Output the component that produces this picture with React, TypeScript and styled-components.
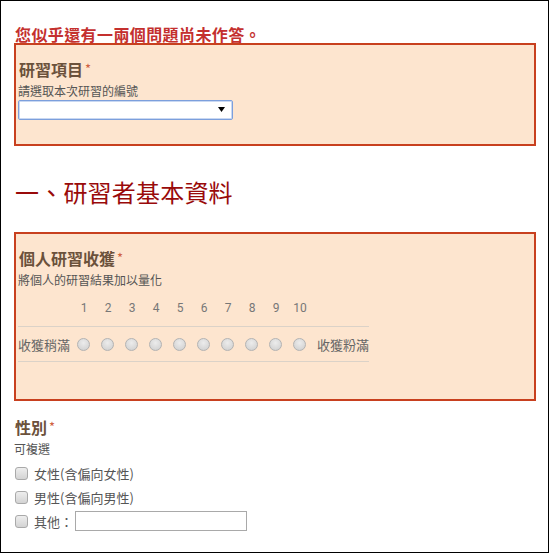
import React from "react";
import styled, { createGlobalStyle } from "styled-components";

const Global = createGlobalStyle`
  html, body { margin: 0; padding: 0; background: #fff; }
  body { font-family: "Noto Sans CJK TC", "Noto Sans", sans-serif; }
  * { box-sizing: border-box; }
`;

const Frame = styled.div`
  width: 549px;
  height: 553px;
  border: 1px solid #000;
  padding: 24px 12px 0 13px;
  overflow: hidden;
`;

const ErrorText = styled.div`
  font-size: 16px;
  line-height: 18px;
  font-weight: 700;
  color: #c4302e;
  padding-left: 1px;
  letter-spacing: 0.4px;
`;

const Section = styled.div<{ $error?: boolean }>`
  border: 2px solid ${(p) => (p.$error ? "#c8401f" : "transparent")};
  background: ${(p) => (p.$error ? "#fde5cf" : "transparent")};
  padding: 14px 0 ${(p) => (p.$error ? "24px" : "0")} ${(p) => (p.$error ? "2px" : "0")};
  margin-left: ${(p) => (p.$error ? "0" : "-2px")};
`;

const Title = styled.div`
  font-size: 16px;
  line-height: 20px;
  font-weight: 700;
  color: #6b513b;
  padding-left: 1px;
  display: flex;
  align-items: flex-start;
`;

const Star = styled.span`
  color: #d0603f;
  font-size: 13px;
  line-height: 14px;
  font-weight: 400;
  margin-left: 2px;
  margin-top: 3px;
`;

const Desc = styled.div`
  margin-top: 4px;
  font-size: 12px;
  line-height: 15px;
  color: #555;
`;

const SelectWrap = styled.div`
  position: relative;
  margin-top: 2px;
  width: 215px;
  height: 20px;
`;

const Select = styled.select`
  appearance: none;
  display: block;
  width: 100%;
  height: 100%;
  border: 1px solid #7c9fdc;
  box-shadow: inset 0 0 0 1px #c9d8f2;
  border-radius: 2px;
  background: #fff;
  outline: none;
  font-size: 12px;
`;

const Arrow = styled.svg`
  position: absolute;
  right: 8px;
  top: 7px;
  pointer-events: none;
`;

const Heading = styled.h2`
  margin: 32px 0 26px 1px;
  font-size: 24px;
  line-height: 28px;
  font-weight: 400;
  color: #990a0a;
  letter-spacing: 0.2px;
`;

const Scale = styled.div`
  margin-top: 3px;
  width: 351px;
  padding-bottom: 13px;
`;

const ScaleRow = styled.div<{ $ruled?: boolean }>`
  display: grid;
  grid-template-columns: 54px repeat(10, 24px) 57px;
  height: 36px;
  align-items: center;
  border-top: ${(p) => (p.$ruled ? "1px solid #dbd2c8" : "none")};
  border-bottom: ${(p) => (p.$ruled ? "1px solid #dbd2c8" : "none")};
`;

const Num = styled.span`
  font-family: Roboto, "Noto Sans", sans-serif;
  font-size: 12px;
  color: #777;
  text-align: center;
`;

const ScaleLabel = styled.span<{ $right?: boolean }>`
  font-size: 13px;
  color: #666;
  white-space: nowrap;
  padding-left: ${(p) => (p.$right ? "5px" : "0")};
`;

const RadioCell = styled.span`
  display: flex;
  justify-content: center;
`;

const Radio = styled.span`
  width: 13px;
  height: 13px;
  border-radius: 50%;
  border: 1px solid #b3b3b3;
  background: radial-gradient(circle at 50% 35%, #ececec 0%, #d6d6d6 70%, #cacaca 100%);
  margin-left: -1px;
`;

const Options = styled.div`
  margin-top: 5px;
  display: flex;
  flex-direction: column;
`;

const Option = styled.label`
  display: flex;
  align-items: center;
  height: 24px;
  font-size: 13px;
  color: #555;
`;

const Check = styled.span`
  width: 13px;
  height: 13px;
  border-radius: 3px;
  border: 1px solid #a9a9a9;
  background: linear-gradient(#eeeeee, #d3d3d3);
  margin: 0 6px 0 1px;
  flex: none;
`;

const OtherInput = styled.input`
  margin-left: 2px;
  width: 172px;
  height: 20px;
  border: 1px solid #a9a9a9;
  background: #fff;
  outline: none;
`;

const scale = [1, 2, 3, 4, 5, 6, 7, 8, 9, 10];

export default function App() {
  return (
    <>
      <Global />
      <Frame>
        <ErrorText>您似乎還有一兩個問題尚未作答。</ErrorText>
        <Section $error>
          <Title>
            研習項目<Star>*</Star>
          </Title>
          <Desc>請選取本次研習的編號</Desc>
          <SelectWrap>
            <Select defaultValue="">
              <option value=""></option>
            </Select>
            <Arrow width="7" height="5" viewBox="0 0 7 5">
              <path d="M0 0 H7 L3.5 5 Z" fill="#000" />
            </Arrow>
          </SelectWrap>
        </Section>

        <Heading>一、研習者基本資料</Heading>

        <Section $error>
          <Title>
            個人研習收獲<Star>*</Star>
          </Title>
          <Desc>將個人的研習結果加以量化</Desc>
          <Scale>
            <ScaleRow>
              <span />
              {scale.map((n) => (
                <Num key={n}>{n}</Num>
              ))}
              <span />
            </ScaleRow>
            <ScaleRow $ruled>
              <ScaleLabel>收獲稍滿</ScaleLabel>
              {scale.map((n) => (
                <RadioCell key={n}>
                  <Radio />
                </RadioCell>
              ))}
              <ScaleLabel $right>收獲粉滿</ScaleLabel>
            </ScaleRow>
          </Scale>
        </Section>

        <Section>
          <Title>
            性別<Star>*</Star>
          </Title>
          <Desc>可複選</Desc>
          <Options>
            <Option>
              <Check />
              女性(含偏向女性)
            </Option>
            <Option>
              <Check />
              男性(含偏向男性)
            </Option>
            <Option>
              <Check />
              其他：
              <OtherInput type="text" />
            </Option>
          </Options>
        </Section>
      </Frame>
    </>
  );
}
